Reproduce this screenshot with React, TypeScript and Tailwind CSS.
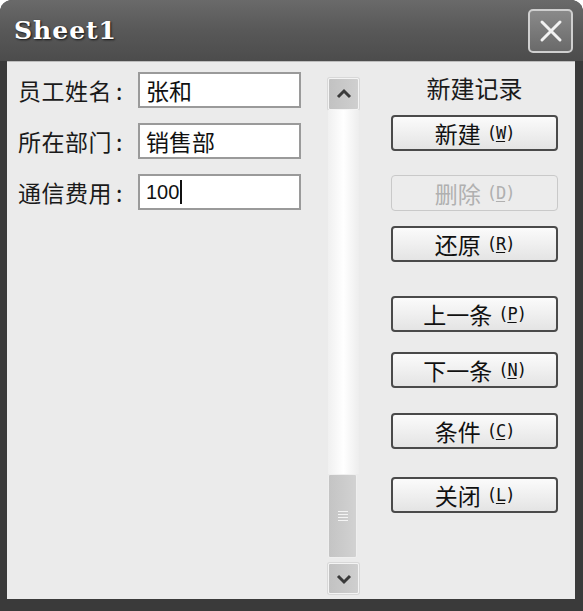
import { ReactNode } from "react";

const cjk = "font-['Noto_Sans_CJK_SC','Noto_Sans',sans-serif]";

interface Field {
  label: string;
  value: string;
  caret?: boolean;
}

const fields: Field[] = [
  { label: "员工姓名", value: "张和" },
  { label: "所在部门", value: "销售部" },
  { label: "通信费用", value: "100", caret: true },
];

function DialogButton({
  text,
  hotkey,
  disabled,
  className = "",
}: {
  text: string;
  hotkey: string;
  disabled?: boolean;
  className?: string;
}) {
  return (
    <button
      className={`h-[36px] w-[167px] rounded-[4px] flex items-center justify-center gap-[6px] ${
        disabled
          ? "border border-[#c9c9c9] bg-[#ececec] text-[#b0b0b0]"
          : "border-2 border-[#4a4a4a] bg-gradient-to-b from-[#fbfbfb] to-[#e4e4e4] text-[#111]"
      } ${className}`}
    >
      <span className="text-[23px] leading-none">{text}</span>
      <span className="text-[17px] leading-none font-['DejaVu_Sans_Mono',monospace] tracking-[-1px]">
        (<span className="underline underline-offset-2">{hotkey}</span>)
      </span>
    </button>
  );
}

function ScrollBox({ children, className = "" }: { children: ReactNode; className?: string }) {
  return (
    <div
      className={`w-[31px] rounded-[2px] border border-[#f4f4f4] bg-gradient-to-r from-[#c2c2c2] to-[#cfcfcf] shadow-[0_0_0_1px_#d8d8d8] flex items-center justify-center ${className}`}
    >
      {children}
    </div>
  );
}

export default function App() {
  return (
    <div className={`w-[583px] h-[611px] bg-[#3a3a3a] rounded-t-[12px] flex flex-col ${cjk}`}>
      {/* title bar */}
      <div className="h-[61px] shrink-0 rounded-t-[12px] bg-gradient-to-b from-[#6a6a6a] via-[#585858] to-[#4c4c4c] flex items-center justify-between pl-[14px] pr-[10px]">
        <span className="text-white font-bold text-[25px] tracking-[1px] font-['DejaVu_Serif',serif] [text-shadow:1px_1px_2px_#111]">
          Sheet1
        </span>
        <div className="w-[45px] h-[44px] rounded-[5px] border-2 border-[#cfcfcf] bg-gradient-to-b from-[#8a8a8a] to-[#6a6a6a] flex items-center justify-center">
          <svg width="28" height="28" viewBox="0 0 28 28" fill="none" stroke="#f2f2f2" strokeWidth="3" strokeLinecap="round">
            <path d="M5 5 23 23M23 5 5 23" />
          </svg>
        </div>
      </div>

      {/* body */}
      <div className="flex-1 ml-[7px] mr-[8px] mb-[12px] bg-[#ebebeb] border-t border-[#bdbdbd] flex pt-[10px] pb-[5px]">
        {/* fields */}
        <div className="w-[321px] shrink-0 flex flex-col gap-[15px] pl-[11px]">
          {fields.map((f) => (
            <div key={f.label} className="flex items-center h-[36px]">
              <span className="text-[23px] text-[#1a1a1a] w-[120px] tracking-[0.5px]">
                {f.label}
                <span className="ml-[4px]">:</span>
              </span>
              <div className="w-[163px] h-[36px] bg-white border-2 border-[#9a9a9a] flex items-center pl-[6px] text-[23px] text-[#111]">
                <span className={f.caret ? "font-['Liberation_Sans',sans-serif] text-[20px]" : ""}>{f.value}</span>
                {f.caret && <span className="w-[2px] h-[24px] bg-[#111] ml-[1px]" />}
              </div>
            </div>
          ))}
        </div>

        {/* scrollbar */}
        <div className="w-[31px] shrink-0 flex flex-col pt-[6px]">
          <ScrollBox className="h-[32px]">
            <svg width="16" height="12" viewBox="0 0 16 12" fill="none" stroke="#3a3a3a" strokeWidth="3">
              <path d="M2 9 8 3l6 6" />
            </svg>
          </ScrollBox>
          <div className="flex-1 bg-gradient-to-r from-[#f0f0f0] via-white to-[#ededed]" />
          <div className="h-[84px] w-[29px] rounded-[2px] border border-[#efefef] bg-gradient-to-r from-[#c4c4c4] to-[#d2d2d2] flex flex-col items-center justify-center gap-[2px]">
            <span className="w-[10px] h-[1px] bg-[#f4f4f4]" />
            <span className="w-[10px] h-[1px] bg-[#f4f4f4]" />
            <span className="w-[10px] h-[1px] bg-[#f4f4f4]" />
            <span className="w-[10px] h-[1px] bg-[#f4f4f4]" />
          </div>
          <ScrollBox className="h-[31px] mt-[5px]">
            <svg width="16" height="12" viewBox="0 0 16 12" fill="none" stroke="#3a3a3a" strokeWidth="3">
              <path d="M2 3l6 6 6-6" />
            </svg>
          </ScrollBox>
        </div>

        {/* record buttons */}
        <div className="flex-1 flex flex-col pl-[32px] pt-[3px]">
          <div className="w-[167px] text-center text-[24px] leading-[26px] text-[#1a1a1a]">新建记录</div>
          <DialogButton text="新建" hotkey="W" className="mt-[14px]" />
          <DialogButton text="删除" hotkey="D" disabled className="mt-[24px]" />
          <DialogButton text="还原" hotkey="R" className="mt-[15px]" />
          <DialogButton text="上一条" hotkey="P" className="mt-[34px]" />
          <DialogButton text="下一条" hotkey="N" className="mt-[20px]" />
          <DialogButton text="条件" hotkey="C" className="mt-[25px]" />
          <DialogButton text="关闭" hotkey="L" className="mt-[28px]" />
        </div>
      </div>
    </div>
  );
}
